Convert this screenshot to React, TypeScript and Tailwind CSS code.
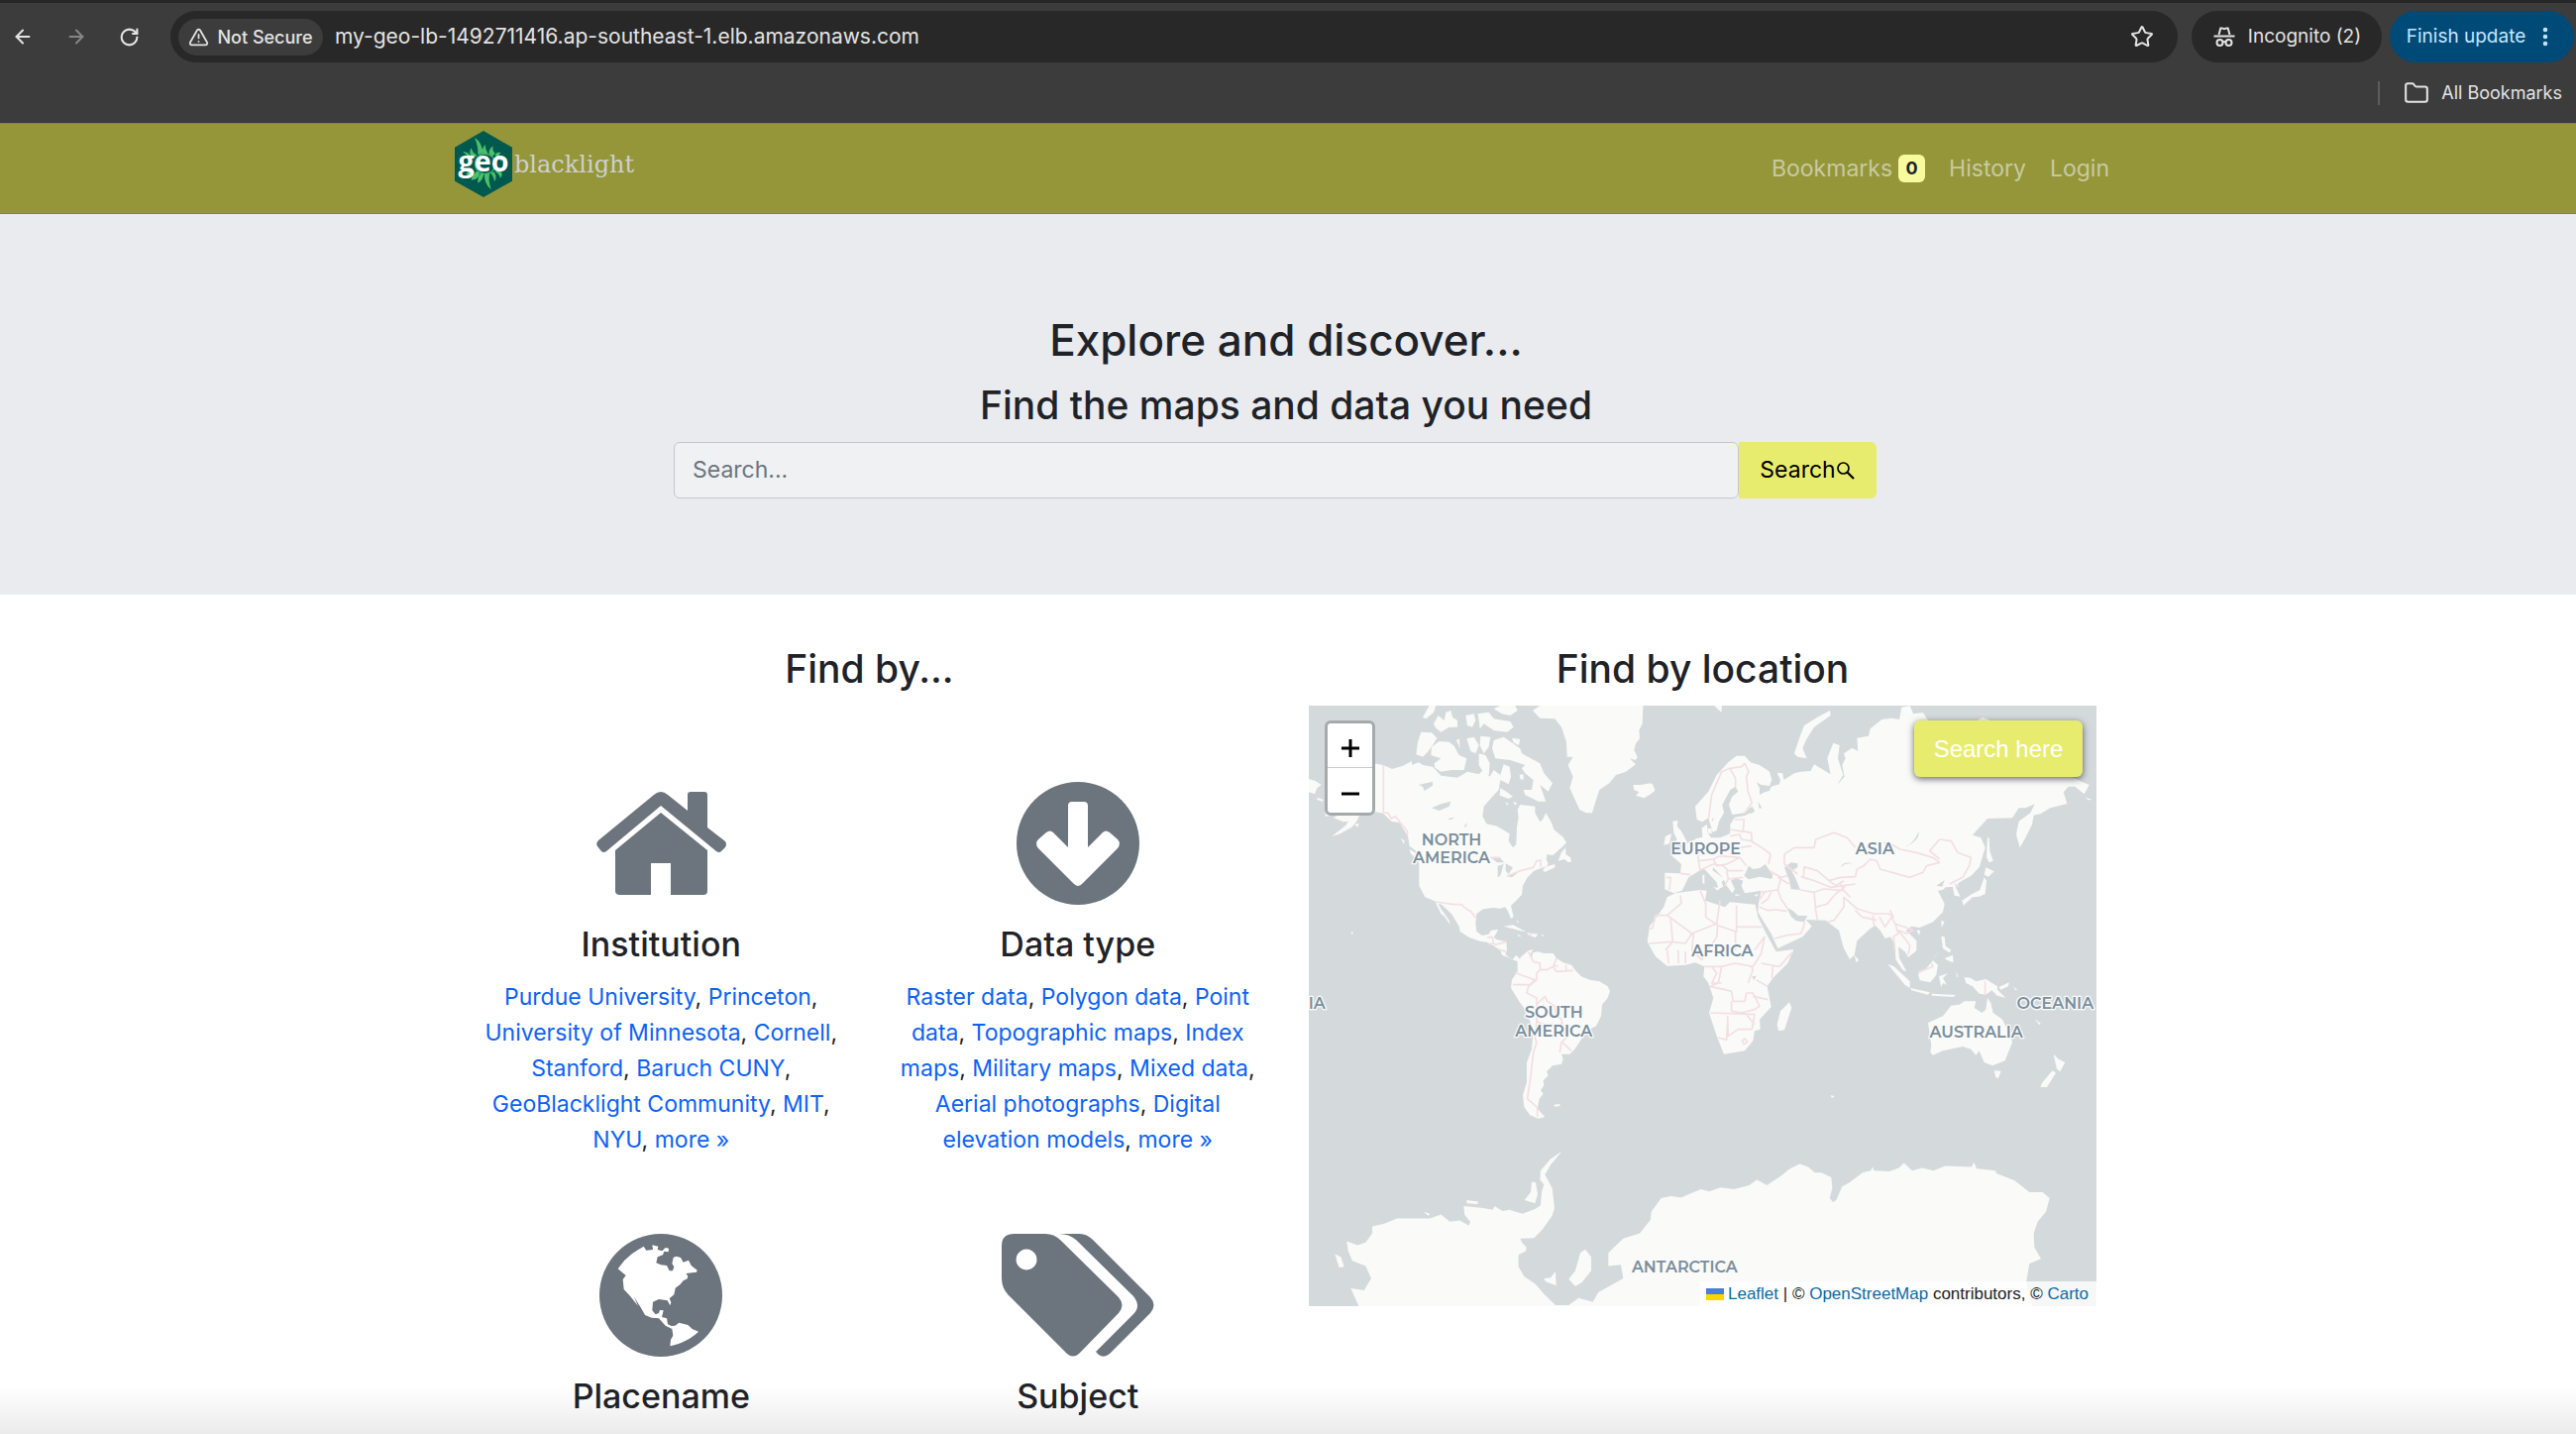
import { ArrowLeft, ArrowRight, EllipsisVertical, Folder, RotateCw, Star, TriangleAlert } from "lucide-react";
import { Fragment, type ReactNode } from "react";

const institutions = [
    "Purdue University",
    "Princeton",
    "University of Minnesota",
    "Cornell",
    "Stanford",
    "Baruch CUNY",
    "GeoBlacklight Community",
    "MIT",
    "NYU",
];

const dataTypes = [
    "Raster data",
    "Polygon data",
    "Point data",
    "Topographic maps",
    "Index maps",
    "Military maps",
    "Mixed data",
    "Aerial photographs",
    "Digital elevation models",
];

const mapLabels = [
    { text: "NORTH", x: 432, y: 422 },
    { text: "AMERICA", x: 432, y: 478 },
    { text: "SOUTH", x: 742, y: 946 },
    { text: "AMERICA", x: 742, y: 1002 },
    { text: "EUROPE", x: 1202, y: 450 },
    { text: "ASIA", x: 1714, y: 450 },
    { text: "AFRICA", x: 1252, y: 760 },
    { text: "AUSTRALIA", x: 2021, y: 1004 },
    { text: "OCEANIA", x: 2260, y: 918 },
    { text: "OCEANIA", x: -66, y: 918 },
    { text: "ANTARCTICA", x: 1138, y: 1716 },
];

function IncognitoIcon() {
    return (
        <svg viewBox="0 0 24 24" className="size-6" fill="none" stroke="currentColor" strokeWidth="2">
            <path d="M6.5 10 8.3 3.4h1.5l2.2.8 2.2-.8h1.5L17.500 10M1.500 11.500h21" />
            <circle cx="7.500" cy="18" r="3" />
            <circle cx="16.500" cy="18" r="3" />
            <path d="M10.500 17.500q1.500-1 3 0" />
        </svg>
    );
}

function BrowserBar() {
    return (
        <div className="bg-[#3c3c3c] border-t-3 border-[#262626] text-[#e3e3e3]">
            <div className="flex items-center pt-2 pr-0.5">
                <div className="flex items-center gap-8 pl-3 w-[172px] shrink-0">
                    <button aria-label="Back"><ArrowLeft size={22} strokeWidth={2.2} /></button>
                    <button aria-label="Forward" className="text-[#868686]"><ArrowRight size={22} strokeWidth={2.2} /></button>
                    <button aria-label="Reload"><RotateCw size={21} strokeWidth={2.4} /></button>
                </div>
                <div className="flex flex-1 items-center h-[52px] rounded-full bg-[#282828] pl-2 pr-6">
                    <button className="flex items-center gap-2 h-[37px] w-[146px] justify-center rounded-full bg-[#3c3c3c] text-[18px] font-medium whitespace-nowrap">
                        <TriangleAlert size={21} />
                        Not Secure
                    </button>
                    <span className="flex-1 ml-3 text-[21px]">my-geo-lb-1492711416.ap-southeast-1.elb.amazonaws.com</span>
                    <button aria-label="Bookmark this page"><Star size={24} strokeWidth={2} /></button>
                </div>
                <button className="ml-3.5 flex items-center justify-center gap-3 h-[52px] w-[192px] rounded-full bg-[#282828] text-[19px]">
                    <IncognitoIcon />
                    Incognito (2)
                </button>
                <button className="ml-2 flex items-center justify-center gap-2 h-[52px] w-[186px] rounded-full bg-[#004a77] text-[#c2e7ff] text-[19px] whitespace-nowrap">
                    Finish update
                    <EllipsisVertical size={24} strokeWidth={2.5} />
                </button>
            </div>
            <div className="flex items-center justify-end h-[61px] pr-3.5 text-[18px]">
                <div className="h-6 w-0.5 bg-[#5d5d5d] mr-6" />
                <button className="flex items-center gap-3">
                    <Folder size={26} strokeWidth={1.9} />
                    All Bookmarks
                </button>
            </div>
        </div>
    );
}

function Logo() {
    return (
        <a href="#" className="flex items-center" aria-label="geoblacklight">
            <svg viewBox="58 36 174 201" className="w-[58px] h-[67px]">
                <path d="M145 36 232 86V188L145 237 58 188V86Z" fill="#00594f" />
                <g fill="#4bbf6b">
                    <path d="M118 56Q142 72 143 104L128 108Q130 84 118 56Z" />
                    <path d="M144 108Q138 90 150 78Q150 92 158 104Z" />
                    <path d="M162 106Q160 92 174 82Q170 96 180 104L172 114Z" />
                    <path d="M180 110Q184 98 198 102Q190 108 190 118Z" />
                    <path d="M190 118Q202 106 218 122Q204 120 198 128Z" />
                    <path d="M126 110Q112 104 108 88Q98 104 112 120Z" />
                    <path d="M110 118Q98 96 82 100Q96 108 98 124Z" />
                    <path d="M92 168Q108 178 118 160L104 152Z" />
                    <path d="M108 184Q112 166 126 158L134 166Q128 186 108 184Z" />
                    <path d="M128 194Q126 176 138 164L146 166Q144 186 128 194Z" />
                    <path d="M148 166H164Q158 182 168 214Q146 196 148 166Z" />
                    <path d="M166 164Q176 172 178 190Q188 174 176 160Z" />
                    <path d="M178 158Q192 164 196 180Q208 164 192 156Z" />
                    <circle cx="150" cy="136" r="32" />
                </g>
                <circle cx="150" cy="136" r="29" fill="#00594f" />
                <text x="145" y="158" textAnchor="middle" fontSize="86" fill="#fff" className="font-['Open_Sans'] font-bold">geo</text>
            </svg>
            <span className="ml-0.5 font-['DejaVu_Serif',serif] text-[24px] leading-7 text-[#cfcfcf]">blacklight</span>
        </a>
    );
}

function Navbar() {
    return (
        <nav className="h-[92px] bg-[#949639] border-y border-[#85872f]">
            <div className="mx-auto flex max-w-[1682px] items-start justify-between pt-[7px] pr-3">
                <Logo />
                <ul className="flex items-center gap-6 pt-5 text-[23px] leading-9 text-[#c9caa0]">
                    <li>
                        <a href="#" className="flex items-center gap-1.5">
                            Bookmarks
                            <span className="flex items-center justify-center h-7 w-[27px] rounded-md bg-[#f8faa0] text-[18px] font-bold text-[#1f2328]">0</span>
                        </a>
                    </li>
                    <li><a href="#">History</a></li>
                    <li><a href="#">Login</a></li>
                </ul>
            </div>
        </nav>
    );
}

function Hero() {
    return (
        <header className="bg-[#e9ebef] pt-[98px] pb-[97px] pr-1">
            <div className="mx-auto max-w-[1682px] text-center font-medium">
                <h1 className="text-[44px] leading-[58px]">Explore and discover...</h1>
                <h2 className="mt-3 text-[39px] leading-[50px]">Find the maps and data you need</h2>
                <form className="mt-3 flex pl-[223px] pr-[245px] h-[57px] font-normal">
                    <input
                        type="text"
                        aria-label="search for"
                        placeholder="Search..."
                        className="min-w-0 flex-1 rounded-md border border-[#c3c8ce] bg-[#f0f1f3] px-[18px] text-[23px] placeholder:text-[#6c757d]"
                    />
                    <button type="button" className="flex items-center justify-center w-[139px] rounded-r-md bg-[#e8ec6e] text-[23px] text-black">
                        Search
                        <svg viewBox="0 0 20 20" className="size-5" fill="none" stroke="currentColor">
                            <circle cx="7.500" cy="7.500" r="5.500" strokeWidth="1.700" />
                            <path d="m11.500 11.500 6.500 6.500" strokeWidth="2.200" />
                        </svg>
                    </button>
                </form>
            </div>
        </header>
    );
}

function HomeIcon() {
    return (
        <svg viewBox="0 0 131 124" className="w-[131px] h-[124px]" fill="#6c757d">
            <path d="M58 13Q65 7 72 13L92 29V13Q92 10 95 10H109Q112 10 112 13V46L130 60Q132 63 130 66L126 70Q124 72 121 70L65 24 10 70Q7 72 5 70L1 65Q-1 62 2 59Z" />
            <path d="M65 31 112 69V110Q112 114 108 114H75V82H55V114H24Q19 114 19 110V69Z" />
        </svg>
    );
}

function ArrowDownIcon() {
    return (
        <svg viewBox="0 0 124 124" className="size-[124px]">
            <circle cx="62" cy="62" r="62" fill="#6c757d" />
            <path
                d="M56 20H68Q72 20 72 24V66L87 51Q90 48 94 51L102 58Q106 62 102 67L66 103Q62 107 58 103L22 67Q18 62 22 58L30 51Q34 48 37 51L52 66V24Q52 20 56 20Z"
                fill="#fff"
            />
        </svg>
    );
}

function GlobeIcon() {
    return (
        <svg viewBox="46 42 372 372" className="size-[124px]">
            <circle cx="232" cy="228" r="186" fill="#6c757d" />
            <path
                d="M102 148 122 122 145 102 160 92 180 80 188 92 208 90 206 76 224 80 222 90 236 94 246 84 256 86 255 97 242 95 238 106 222 112 218 130 232 136 250 138 258 154 268 154 272 142 266 132 270 114 278 110 292 114 300 128 316 122 324 138 342 152 340 158 326 160 308 162 314 170 312 178 300 184 290 196 276 206 272 226 258 238 263 250 260 259 252 244 226 240 208 248 206 274 216 286 226 282 229 273 240 274 235 294 250 298 253 316 264 321 275 320 287 311 314 318 327 330 346 338C322 360 296 374 260 382L262 362 269 350 266 330 246 320 226 298 204 296 184 288 172 266 150 232 163 260 140 232 120 210 117 180 126 168Z"
                fill="#fff"
            />
        </svg>
    );
}

function TagsIcon() {
    return (
        <svg viewBox="0 0 154 124" className="w-[154px] h-[124px]" fill="#6c757d">
            <path
                fillRule="evenodd"
                d="M12 0H44Q53 0 59 6L118 64Q125 72 118 80L78 121Q72 126 66 121L7 62Q0 55 0 45V12Q0 0 12 0ZM25 15.500A10.500 10.500 0 1 0 25.100 15.500Z"
            />
            <path d="M58 0H79Q86 0 92 6L150 64Q157 72 150 80L109 121Q103 126 98 122L95 119 133 81Q141 73 133 63L75 6Q68 0 58 0Z" />
        </svg>
    );
}

type CategoryProps = {
    icon: ReactNode;
    title: string;
    links?: string[];
};

function Category({ icon, title, links }: CategoryProps) {
    return (
        <div className="flex flex-col items-center px-5 text-center">
            {icon}
            <h3 className="mt-[18px] text-[34px] leading-[44px] font-medium">{title}</h3>
            {links && (
                <p className="mt-[13px] text-[23px] leading-9">
                    {links.map((link) => (
                        <Fragment key={link}>
                            <a href="#" className="text-[#0d62f5]">{link}</a>,{" "}
                        </Fragment>
                    ))}
                    <a href="#" className="text-[#0d62f5]">more »</a>
                </p>
            )}
        </div>
    );
}

function WorldMap() {
    return (
        <svg viewBox="0 0 2385 1818" className="block w-full bg-[#d4dadc]" role="img" aria-label="World map">
            <g fill="#fafaf8">
                {/* North America */}
                <path d="M50 335 90 330 75 340 105 352 120 350 112 362 70 396 95 388 130 368 145 350 155 328 185 318 225 326 250 350 275 355 300 395 305 425 325 440 334 480 334 545 352 580 382 592 400 630 412 640 428 664 425 650 400 615 392 600 402 602 432 630 455 668 458 684 486 702 518 713 540 716 556 725 580 740 585 755 618 768 628 755 640 768 632 775 610 766 595 752 600 742 598 715 568 708 560 702 574 678 552 680 545 692 525 696 508 684 505 660 508 630 528 616 560 612 580 614 594 610 602 620 612 645 620 640 612 605 628 590 645 572 648 545 662 520 682 500 710 490 745 480 745 490 715 504 708 498 725 480 718 462 740 452 770 425 780 415 770 398 742 375 735 355 718 325 708 345 700 352 685 325 685 305 640 300 632 315 635 340 630 368 628 420 618 430 605 410 608 388 570 365 538 358 526 335 530 305 552 280 575 255 580 225 605 238 612 215 608 185 590 178 580 210 560 195 548 215 528 195 515 208 480 200 450 218 400 212 375 185 345 180 332 172 312 180 312 168 285 182 252 192 225 180 195 175 50 180Z" />
                <path d="M0 222 20 228 38 240 25 250 18 268 0 262ZM25 278 45 285 40 290 25 284ZM138 360 152 356 148 368ZM278 400 290 410 288 420ZM305 435 330 450 325 462 308 448Z" />
                <path d="M340 80 372 82 388 98 375 120 360 140 345 155 325 148 330 110ZM372 125 395 108 425 110 440 122 455 150 478 160 470 195 430 195 400 200 382 188 380 175 400 160 370 150ZM345 35 365 0 385 0 378 20 355 40ZM378 55 392 30 410 45 415 20 430 15 435 35 450 45 450 65 425 65 400 80 385 68ZM475 30 500 25 505 45 495 65 480 60ZM512 25 545 20 560 40 610 48 620 65 600 80 560 75 530 55 518 70 515 45ZM560 10 580 0 625 0 632 15 610 30 585 25ZM478 100 500 95 515 120 505 145 490 138ZM520 92 550 95 545 125 530 145 518 120ZM515 145 535 150 548 175 545 210 530 205 515 180Z" />
                <path d="M560 105 590 95 605 105 640 130 645 145 700 175 712 205 738 235 725 260 700 240 718 290 695 290 655 270 650 255 675 255 680 225 655 205 645 190 655 180 610 165 565 160 555 130ZM580 250 600 262 618 275 605 282 578 272ZM638 210 650 208 650 225 640 222ZM595 292 605 298 600 302ZM618 292 630 294 625 302ZM447 105 455 100 458 130ZM615 98 640 102 636 120 620 112Z" />
                <path d="M755 470 765 445 778 430 778 450 792 460 795 472 785 475 775 465ZM590 668 618 664 658 685 635 680ZM660 688 695 692 685 702 665 694ZM632 692 645 698 635 698ZM702 692 714 696 708 698ZM128 684 136 688 130 692ZM628 648 636 656 632 658Z" />
                {/* Greenland and Iceland */}
                <path d="M678 15 700 0 1012 0 1010 55 1000 75 1002 100 990 115 985 135 995 155 990 165 972 160 990 178 960 200 930 210 910 235 880 255 870 285 858 325 840 325 820 315 790 250 800 215 785 180 800 155 782 155 780 110 765 65 745 40 700 38ZM982 240 1005 240 1035 235 1048 258 1035 268 1015 280 990 272 1000 262 985 255ZM1228 0 1250 0 1250 20 1240 12Z" />
                {/* South America */}
                <path d="M632 775 645 758 665 742 680 738 668 755 675 765 678 748 695 745 712 750 740 750 750 765 770 778 795 785 810 805 825 820 850 830 880 835 905 850 912 865 905 885 888 905 885 940 870 970 840 985 825 1010 805 1040 790 1055 765 1055 770 1070 765 1085 738 1090 720 1108 725 1120 710 1135 712 1150 702 1165 710 1175 698 1190 692 1220 715 1245 695 1250 670 1240 652 1215 648 1180 660 1140 660 1080 675 1040 680 980 655 920 640 900 612 855 615 830 632 805ZM742 1208 760 1206 760 1212 745 1214Z" />
            </g>

            {/* Old World and Oceania */}
            <g fill="#fafaf8" transform="translate(1020 0)">
                <path d="M58 506 105 508 108 480 92 466 80 455 105 440 130 415 155 402 172 398 170 370 186 360 188 385 198 400 225 400 245 392 256 386 256 360 270 338 300 333 330 318 322 305 300 325 262 330 252 300 262 275 280 260 272 245 256 255 232 300 237 325 222 350 215 378 203 383 190 340 172 352 155 345 150 305 190 260 215 210 250 172 275 152 300 152 318 172 345 180 375 200 382 225 375 243 350 240 335 232 345 250 345 270 360 262 375 258 380 245 405 238 408 225 398 203 415 205 418 225 450 205 470 200 500 198 510 178 530 190 560 208 550 160 568 113 587 120 582 160 598 210 580 240 602 215 595 180 605 160 600 145 625 128 643 138 640 98 675 92 680 70 715 42 745 38 768 42 775 5 800 0 810 25 840 22 865 60 1290 215 1320 230 1343 240 1328 268 1300 245 1280 245 1265 262 1276 297 1225 310 1195 328 1175 332 1170 360 1150 400 1133 430 1122 390 1130 350 1165 325 1178 298 1150 310 1130 310 1110 340 1035 342 1000 380 990 392 1015 400 1028 430 1010 490 985 515 950 535 938 548 953 578 935 575 930 548 908 550 900 558 885 560 905 600 900 625 870 655 830 672 805 668 788 680 820 712 820 742 795 762 785 745 765 730 768 765 790 805 778 800 757 768 755 720 740 700 725 705 710 680 695 665 680 675 640 712 632 755 618 768 600 735 585 680 565 665 545 650 485 648 503 668 475 700 400 735 380 690 355 650 340 625 342 600 350 560 300 568 290 545 295 530 272 522 258 530 270 555 262 568 245 545 235 522 205 490 202 498 240 525 230 535 235 548 220 556 215 535 175 492 150 508 130 520 110 560 85 568 58 556Z" />
                <path d="M82 350 98 348 95 365 108 380 128 418 80 420 95 405 85 385ZM60 395 78 388 72 418 55 422ZM0 242 20 236 28 255 0 275ZM188 372 200 372 200 388 190 386ZM172 512 178 512 178 540 172 538ZM205 550 225 552 218 560ZM272 570 288 574 272 576ZM328 574 342 570 336 578Z" />
                <path d="M450 145 465 100 480 60 520 35 558 15 560 30 510 65 485 105 475 130 488 160 460 155ZM208 0 230 0 228 18ZM1003 45 1020 36 1045 45ZM1332 278 1352 285 1340 286Z" />
                <path d="M90 568 165 558 185 560 180 590 240 610 255 595 332 602 340 640 365 690 395 745 448 738 430 780 385 825 368 850 380 912 345 950 347 980 330 985 325 1015 300 1045 237 1055 215 1000 192 930 205 885 190 840 175 820 178 790 150 778 120 785 65 788 30 760 5 715 12 668 55 610 65 580ZM435 898 442 915 420 982 402 985 398 965 408 925Z" />
                <path d="M1035 400 1040 400 1042 440 1052 470 1040 475 1032 460ZM1030 490 1055 502 1038 518 1025 512ZM1025 520 1032 530 1028 570 1010 578 990 580 962 605 958 590 985 572 1012 558ZM895 650 905 655 896 672ZM820 680 832 680 828 695ZM632 755 645 770 638 778ZM895 698 905 700 908 728 925 740 920 748 900 735ZM905 765 930 755 932 778 915 772ZM888 745 862 775 880 755Z" />
                <path d="M733 782 752 790 800 835 800 855 785 845 760 815ZM802 855 860 868 855 875 805 862ZM865 872 940 876 930 882 868 878ZM825 812 850 795 870 772 885 785 880 815 862 838 830 832ZM888 820 915 810 900 825 912 845 900 840 895 852ZM940 805 946 820 942 822ZM965 822 985 825 1000 835 1030 828 1065 850 1065 860 1090 885 1065 878 1048 862 1030 875 1010 872 990 850 970 840ZM1070 852 1100 838 1098 850 1075 860ZM1112 850 1125 860 1120 862ZM1178 948 1196 962 1192 966Z" />
                <path d="M855 960 900 940 925 908 950 905 965 895 1000 895 995 915 1018 930 1030 920 1035 885 1045 900 1052 930 1080 950 1105 1000 1110 1020 1088 1075 1050 1090 1025 1080 1010 1045 1000 1058 985 1040 960 1032 900 1045 870 1058 862 1050 865 1030ZM1055 1105 1076 1106 1068 1128 1060 1126ZM1235 1055 1250 1070 1270 1080 1255 1108 1245 1100ZM1232 1105 1242 1112 1215 1155 1195 1155 1200 1142ZM560 1180 572 1182 564 1188Z" />
            </g>

            {/* Antarctica */}
            <g fill="#fafaf8" transform="translate(-33 -33) scale(1 1.186)">
                <path d="M148 1395 180 1405 205 1398 225 1375 225 1357 262 1350 300 1337 400 1337 433 1327 460 1345 490 1342 518 1355 522 1345 505 1328 502 1305 560 1310 590 1315 595 1305 620 1318 640 1315 680 1325 720 1312 735 1303 738 1270 745 1250 733 1238 735 1215 765 1185 798 1166 790 1175 765 1200 748 1225 770 1260 777 1310 770 1330 740 1365 715 1387 673 1388 680 1400 692 1410 690 1420 668 1430 668 1460 685 1485 720 1505 745 1530 780 1558 820 1558 850 1540 893 1550 910 1525 985 1490 978 1455 940 1458 940 1425 985 1388 1035 1375 1068 1340 1070 1320 1100 1285 1130 1280 1160 1284 1172 1280V1562H185L160 1515 200 1520 222 1490 205 1458 165 1445 152 1420ZM686 1290 705 1270 708 1243 720 1245 726 1275 718 1298ZM510 1290 545 1294 545 1300 512 1298ZM350 1318 365 1324ZM380 1320 400 1325 395 1330ZM112 1428 130 1435 140 1460 125 1462ZM820 1492 840 1470 855 1425 870 1416 888 1435 888 1470 860 1500 840 1510ZM745 1490 765 1488 780 1472 782 1508 750 1498Z" />
                <path transform="translate(1170 0)" d="M0 1280 50 1262 75 1268 110 1258 150 1262 195 1253 220 1238 250 1252 290 1230 320 1210 350 1198 375 1205 395 1220 415 1220 445 1232 448 1260 440 1285 450 1295 460 1290 478 1255 500 1245 540 1220 565 1215 570 1205 575 1215 620 1217 650 1208 665 1195 690 1215 720 1208 755 1215 790 1203 870 1205 877 1193 885 1210 942 1215 945 1222 1000 1240 1045 1270 1085 1270 1106 1285 1095 1320 1070 1345 1058 1375 1060 1410 1080 1440 1045 1452 1035 1500 1055 1562H0Z" />
            </g>

            {/* Lakes and inland seas */}
            <g fill="#d4dadc">
                <path d="M332 240 375 230 375 242 350 258 345 245ZM372 310 400 298 430 290 425 305 395 318ZM420 342 442 338 430 346ZM470 365 480 355 476 368ZM550 460 580 462 592 475 570 475ZM572 485 590 480 580 515 572 520ZM596 478 618 490 605 510 596 500ZM600 516 635 505 615 520ZM720 450 750 455 740 475 722 472Z" />
                <g transform="translate(1020 0)">
                    <path d="M298 515 312 485 325 495 345 492 362 480 385 512 382 525 345 518 312 526ZM420 490 440 475 460 478 460 490 442 500 455 525 468 558 440 556 435 530ZM428 612 445 620 462 636 490 636 480 655 455 652 440 638ZM312 305 330 320 318 328ZM340 290 352 310 344 312ZM322 820 335 818 328 832ZM200 345 208 338 202 350Z" />
                    <path d="M788 426Q815 415 826 382Q832 405 790 426ZM592 486Q600 470 628 478Q600 476 594 488Z" />
                    <path d="M880 545 905 528 898 548Z" />
                </g>
            </g>

            {/* Country borders */}
            <g fill="none" stroke="#f3dfe3" strokeWidth="5" strokeLinejoin="round">
                <path d="M226 180V324L240 325 250 342 262 335 298 380 298 392M382 594 440 602 462 602 480 618 490 622 505 642M550 460H580M600 516 640 500 680 490 690 470 702 468 702 488M540 702 555 700 560 720 545 722M560 725 598 715M575 738 598 745" />
                <path d="M665 745 680 775 700 780 700 800 720 800 740 790 750 805 800 802M750 765 742 785 755 790M778 785 780 802M625 808 650 818 685 830 670 845 618 845M700 800 690 810 690 830 665 850 660 870 690 885 690 905 715 880 722 895 745 910 748 935 765 950 770 970 740 965 708 965 690 955 690 905M690 955 685 1005 690 1020 680 1050 672 1120 662 1190 690 1215M692 1215 692 1245M765 960 768 985 785 1000 765 1020 760 1050M768 1020 795 1045M672 690V700" />
                <g transform="translate(1020 0)">
                    <path d="M190 345 200 270 230 200 255 190 290 185 300 175 312 200 305 215 310 260 322 295 300 325M255 190 272 220 272 245M270 345H298L295 380 320 385 322 412 355 432 378 450 372 480M256 375 298 382M256 395 285 390 290 405 322 410M155 410 160 470 205 465 225 455 285 460 305 485M160 470 165 498 205 480 235 485 250 500 295 500M205 465 215 485 245 480 285 460M245 500 250 525 240 545M250 525 295 520M285 430 320 425M62 520 76 520 72 558M105 508 135 512" />
                    <path d="M350 565 400 558 410 520 375 500M400 520 435 540M410 520 430 515M350 600 370 585 380 565M400 558 410 585 430 615M345 610 370 620 395 618 428 622M390 705 430 695 470 690 478 670 482 655M342 590 365 560M468 558 510 565 540 555 600 560M510 565 515 620 520 648M515 610 550 600 575 570 605 548M550 655 570 650 600 610 600 580 640 615 690 630 735 630 750 640 740 620M460 510 420 480 420 450 450 430 510 430 515 405 570 385 610 400 635 430M478 518 480 488 520 500 555 530 590 520 635 518 640 495 660 485 680 465 700 470 710 495 800 520 840 505 850 485 890 475 870 460 820 445 770 435 745 420 720 415M635 540 600 545 560 550 510 530 470 518M555 530 575 545 600 530M890 405 925 410 945 445 985 460 980 485 960 520 920 540M890 405 860 440 890 465M590 540 600 560 620 580M635 620 655 640 700 650M688 635 692 670M708 640 725 670 745 640 755 660 765 690 750 700 755 740M780 668 810 680 790 690 765 680 800 725 795 755M755 660 780 670M825 808 870 790 865 780M1028 835V875M935 540 948 548" />
                    <path d="M65 635H30L20 675H10M105 575 108 598 65 635 140 690 215 660 225 590M165 560 182 600 182 640 218 665 275 685V605M275 670H352M272 685V740M75 640 82 715 10 720M140 690 120 720 82 715 60 740M65 740 70 780M98 740 100 780M120 745V780M145 690 140 740 170 770 215 700 218 665M178 790 230 790 270 780 325 790 350 750 360 700 330 740M350 780 405 790 445 745M385 790 382 825M200 790 215 810 200 840H230M230 790 220 840 195 850 240 860 260 865 265 895 300 895 305 870 325 870 345 910 330 920 290 930 260 925 260 895M195 930 330 935 322 980 280 980 250 1000 248 940M220 1005 245 1012 248 960M300 930 330 965M310 840 325 800 320 790M325 880 370 890M335 830 368 850M292 1015 300 1008 308 1018 298 1025Z" />
                </g>
            </g>

            <g
                className="font-['Montserrat','Inter',sans-serif] font-semibold"
                fontSize="48"
                textAnchor="middle"
                fill="#7a8f9e"
                stroke="#fafaf8"
                strokeWidth="8"
                strokeLinejoin="round"
                paintOrder="stroke"
            >
                {mapLabels.map((label, i) => (
                    <text key={i} x={label.x} y={label.y}>{label.text}</text>
                ))}
            </g>
        </svg>
    );
}

function LocationMap() {
    return (
        <div className="relative mt-3 font-['Liberation_Sans',Arial,sans-serif]">
            <WorldMap />
            <div className="absolute top-[15px] left-4 flex flex-col w-[51px] rounded-md border-3 border-[#a6aaab] bg-white">
                <button aria-label="Zoom in" className="flex h-[45px] items-center justify-center border-b border-[#ccc] pt-1.5">
                    <svg viewBox="0 0 20 20" className="size-5" stroke="#000" strokeWidth="3"><path d="M1 10H19M10 1V19" /></svg>
                </button>
                <button aria-label="Zoom out" className="flex h-[45px] items-center justify-center pt-1.5">
                    <svg viewBox="0 0 20 20" className="size-5" stroke="#000" strokeWidth="3"><path d="M1 10H19" /></svg>
                </button>
            </div>
            <button className="absolute top-[15px] right-3.5 h-[57px] w-[170px] rounded-md bg-[#e8ec6e] text-2xl text-white shadow-[0_2px_7px_rgba(0,0,0,0.6)]">
                Search here
            </button>
            <div className="absolute right-0 bottom-0 flex items-center h-[25px] pl-[7px] pr-2 bg-white/80 text-[17px] whitespace-pre text-[#222]">
                <svg viewBox="0 0 18 12" className="mr-1 w-[18px] h-3">
                    <path fill="#4c7be1" d="M0 0h18v6H0z" />
                    <path fill="#ffd500" d="M0 6h18v6H0z" />
                </svg>
                <a href="#" className="text-[#0a6ba5]">Leaflet</a>
                <span> | © </span>
                <a href="#" className="text-[#0a6ba5]">OpenStreetMap</a>
                <span> contributors, © </span>
                <a href="#" className="text-[#0a6ba5]">Carto</a>
            </div>
        </div>
    );
}

function App() {
    return (
        <div className="relative min-h-screen bg-white font-['Inter',sans-serif] text-[#1f2328]">
            <BrowserBar />
            <Navbar />
            <Hero />
            <div className="pr-1">
                <main className="mx-auto grid max-w-[1682px] grid-cols-2 pt-[50px]">
                    <section>
                        <h2 className="text-center text-[39px] leading-[50px] font-medium">Find by...</h2>
                        <div className="mt-[89px] grid grid-cols-2 gap-y-[77px]">
                            <Category icon={<HomeIcon />} title="Institution" links={institutions} />
                            <Category icon={<ArrowDownIcon />} title="Data type" links={dataTypes} />
                            <Category icon={<GlobeIcon />} title="Placename" />
                            <Category icon={<TagsIcon />} title="Subject" />
                        </div>
                    </section>
                    <section className="px-[23px]">
                        <h2 className="text-center text-[39px] leading-[50px] font-medium">Find by location</h2>
                        <LocationMap />
                    </section>
                </main>
            </div>
            <div className="pointer-events-none absolute inset-x-0 bottom-0 h-12 bg-linear-to-b from-transparent to-black/8" />
        </div>
    );
}

export default App;
